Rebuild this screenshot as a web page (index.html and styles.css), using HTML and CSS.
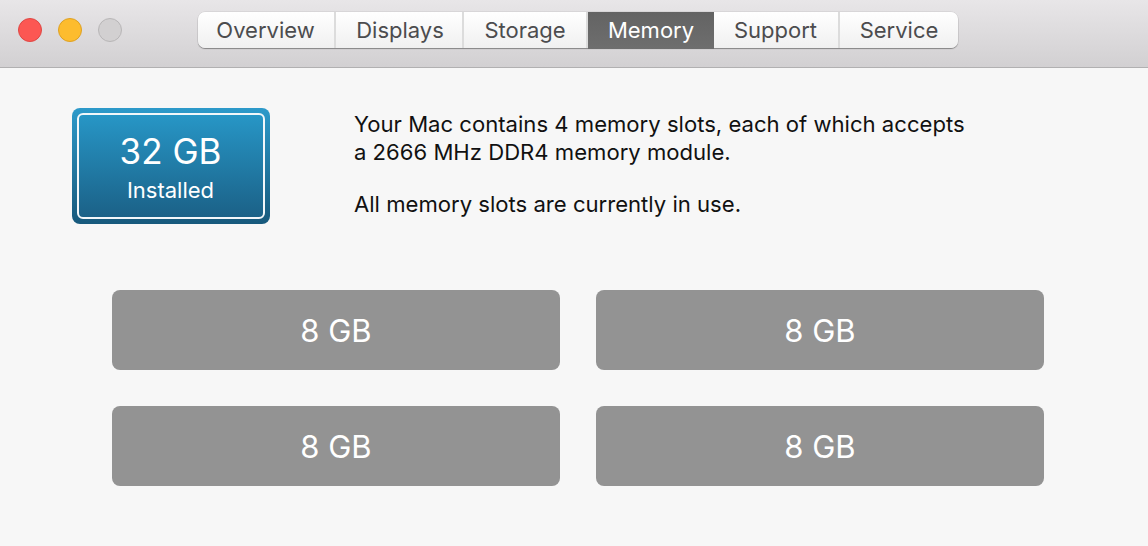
FILE: index.html
```html
<!DOCTYPE html>
<html lang="en">
<head>
    <meta charset="UTF-8">
    <meta name="viewport" content="width=device-width, initial-scale=1.0">
    <title>About This Mac - Memory</title>
    <link rel="stylesheet" href="styles.css">
</head>
<body>
    <div class="titlebar">
        <div class="lights">
            <span class="light red"></span>
            <span class="light yellow"></span>
            <span class="light gray"></span>
        </div>
        <ul class="tabs">
            <li class="tab-overview">Overview</li>
            <li class="tab-displays">Displays</li>
            <li class="tab-storage">Storage</li>
            <li class="tab-memory active">Memory</li>
            <li class="tab-support">Support</li>
            <li class="tab-service">Service</li>
        </ul>
    </div>

    <div class="content">
        <div class="summary">
            <div class="badge">
                <div class="badge-inner">
                    <div class="badge-size">32 GB</div>
                    <div class="badge-label">Installed</div>
                </div>
            </div>
            <div class="info">
                <p>Your Mac contains 4 memory slots, each of which accepts<br>a 2666 MHz DDR4 memory module.</p>
                <p>All memory slots are currently in use.</p>
            </div>
        </div>

        <div class="slots">
            <div class="slot">8 GB</div>
            <div class="slot">8 GB</div>
            <div class="slot">8 GB</div>
            <div class="slot">8 GB</div>
        </div>
    </div>
</body>
</html>
```

FILE: styles.css
```css
html, body {
    margin: 0;
    padding: 0;
}

body {
    width: 1148px;
    height: 546px;
    overflow: hidden;
    background-color: #f7f7f7;
    font-family: Inter, "Liberation Sans", sans-serif;
    color: #111;
}

.titlebar {
    height: 67px;
    display: flex;
    align-items: flex-start;
    background: linear-gradient(#e8e6e8, #d2d0d2);
    border-bottom: 1px solid #b1b0b1;
}

.lights {
    display: flex;
    gap: 16px;
    padding: 18px 0 0 18px;
    width: 198px;
    box-sizing: border-box;
}

.light {
    width: 24px;
    height: 24px;
    border-radius: 50%;
    box-sizing: border-box;
    border: 1px solid;
}

.red {
    background-color: #fc5753;
    border-color: #df4744;
}

.yellow {
    background-color: #fdbc2e;
    border-color: #dea123;
}

.gray {
    background-color: #d2d0d1;
    border-color: #b8b6b7;
}

.tabs {
    list-style-type: none;
    margin: 12px 0 0;
    padding: 0;
    display: flex;
    height: 36px;
    background: linear-gradient(#ffffff, #f0f0f0);
    border-radius: 7px;
    box-shadow: 0 1px 1px rgba(0, 0, 0, 0.35), 0 0 0 0.5px rgba(0, 0, 0, 0.1);
}

.tabs li {
    display: flex;
    align-items: center;
    justify-content: center;
    box-sizing: border-box;
    font-size: 22px;
    color: #4c4c4e;
    border-right: 2px solid #dcdcdc;
}

.tabs li:last-child {
    border-right: none;
}

.tab-overview { width: 138px; padding-right: 1px; }
.tab-displays { width: 128px; padding-left: 2px; }
.tab-storage { width: 124px; }
.tab-memory { width: 126px; }
.tab-support { width: 126px; padding-right: 1px; }
.tab-service { width: 118px; }

.tabs .active {
    background: linear-gradient(#636363, #6e6e6e);
    color: #fff;
    border-right: none;
    height: 37px;
    padding-bottom: 1px;
}

.content {
    padding: 40px 0 0 72px;
}

.summary {
    display: flex;
    gap: 84px;
    height: 116px;
}

.badge {
    width: 198px;
    height: 116px;
    box-sizing: border-box;
    padding: 5px;
    border-radius: 8px;
    background: linear-gradient(#2d9aca, #17597c);
}

.badge-inner {
    height: 100%;
    box-sizing: border-box;
    border: 2px solid #f2f7fa;
    border-radius: 6px;
    color: #fff;
    padding-right: 1px;
    text-align: center;
    background: linear-gradient(#2796c6, #1b6187);
}

.badge-size {
    font-size: 35px;
    line-height: 42px;
    margin-top: 15px;
}

.badge-label {
    font-size: 22px;
    line-height: 26px;
    margin-top: 5px;
}

.info {
    padding-top: 2px;
    font-size: 22.1px;
    line-height: 28px;
}

.info p {
    margin: 0 0 24px;
}

.slots {
    display: grid;
    grid-template-columns: 448px 448px;
    grid-auto-rows: 80px;
    gap: 36px;
    margin: 66px 0 0 40px;
}

.slot {
    display: flex;
    align-items: center;
    justify-content: center;
    background-color: #939393;
    border-radius: 8px;
    color: #fff;
    font-size: 31px;
}
```
